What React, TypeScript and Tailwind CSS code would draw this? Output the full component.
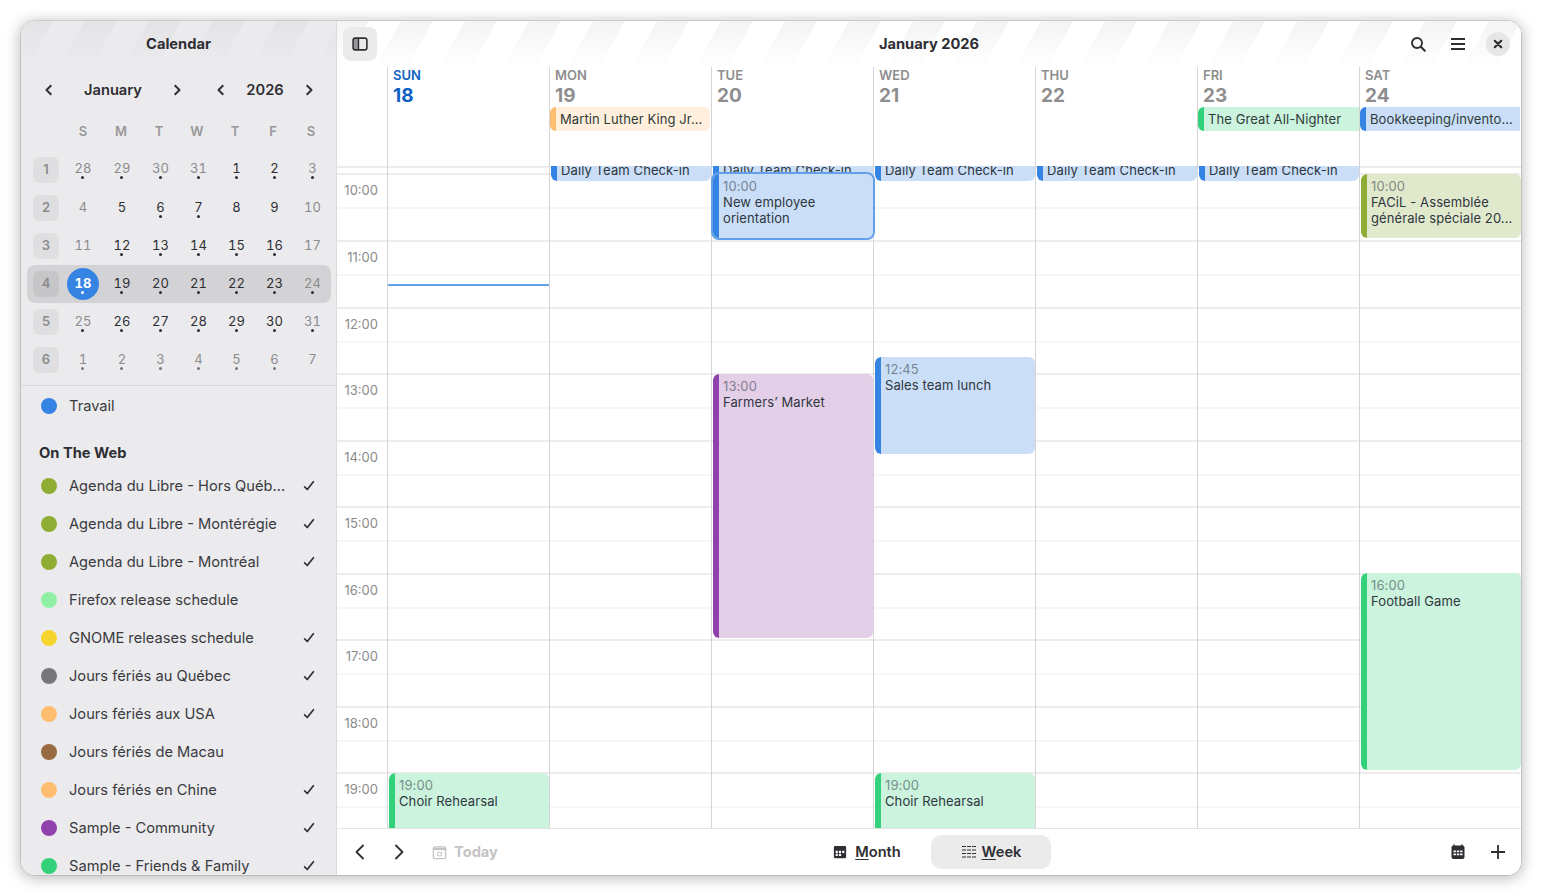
import React from "react";

const BLUE = "#3584e4";
const GREEN = "#33d17a";
const ORANGE = "#ffbe6f";
const PURPLE = "#9141ac";
const OLIVE = "#8fad35";

const HOUR = 66.55;
const y = (t: number) => 8 + (t - 10) * HOUR;

function Icon({ children, size = 16, className = "" }: { children: React.ReactNode; size?: number; className?: string }) {
  return (
    <svg width={size} height={size} viewBox="0 0 16 16" fill="none" className={className}>
      {children}
    </svg>
  );
}

const ChevL = () => (
  <Icon>
    <path d="M10.300 3.200 5.500 8l4.800 4.800" stroke="currentColor" strokeWidth="2" strokeLinejoin="round" />
  </Icon>
);
const ChevR = () => (
  <Icon>
    <path d="M5.700 3.200 10.500 8l-4.800 4.800" stroke="currentColor" strokeWidth="2" strokeLinejoin="round" />
  </Icon>
);
const BigChevL = () => (
  <Icon>
    <path d="M11.500 1 4.500 8l7 7" stroke="currentColor" strokeWidth="1.800" strokeLinejoin="round" />
  </Icon>
);
const BigChevR = ({ className = "" }: { className?: string }) => (
  <Icon className={className}>
    <path d="M4.500 1l7 7-7 7" stroke="currentColor" strokeWidth="1.800" strokeLinejoin="round" />
  </Icon>
);
const Check = () => (
  <Icon size={14}>
    <path d="M2.500 8.500 6 12l7.500-9.500" stroke="#2e2e33" strokeWidth="1.900" strokeLinejoin="round" />
  </Icon>
);

function Nav({ label }: { label: string }) {
  return (
    <div className="flex items-center justify-between">
      <ChevL />
      <span className="text-[14.67px] font-semibold text-[#2e2e33]">{label}</span>
      <ChevR />
    </div>
  );
}

type Cell = { d: number; dim?: boolean; dot?: boolean; today?: boolean };
const c = (d: number, dim = false, dot = true, today = false): Cell => ({ d, dim, dot, today });
const weeks: Cell[][] = [
  [c(28, true), c(29, true), c(30, true), c(31, true), c(1), c(2), c(3, true)],
  [c(4, true, false), c(5, false, false), c(6), c(7), c(8, false, false), c(9, false, false), c(10, true, false)],
  [c(11, true, false), c(12), c(13), c(14), c(15), c(16), c(17, true, false)],
  [c(18, false, true, true), c(19), c(20), c(21), c(22), c(23), c(24, true)],
  [c(25, true), c(26), c(27), c(28), c(29), c(30), c(31, true)],
  [c(1, true), c(2, true), c(3, true), c(4, true), c(5, true), c(6, true), c(7, true, false)],
];

function MiniCalendar() {
  return (
    <div className="ml-1.5 w-[304px]">
      <div className="grid h-[38px] grid-cols-[37px_repeat(7,38px)]">
        <div />
        {["S", "M", "T", "W", "T", "F", "S"].map((d, i) => (
          <div key={i} className="flex items-center justify-center text-[13px] font-semibold text-[#98989a]">
            {d}
          </div>
        ))}
      </div>
      <div className="relative grid auto-rows-[38px] grid-cols-[37px_39px_39px_38px_38px_38px_38px_38px]">
        <div className="absolute left-0 top-[114px] h-[38px] w-[304px] rounded-lg bg-[#d3d3d5]" />
        {weeks.map((w, i) => (
          <React.Fragment key={i}>
            <div className="relative flex items-center justify-center pl-px">
              <div className={`flex h-[26px] w-[26px] items-center justify-center rounded-md text-[13px] font-semibold text-[#8b8b8d] ${i === 3 ? "bg-[#c6c6c8]" : "bg-[#dfdfe1]"}`}>
                {i + 1}
              </div>
            </div>
            {w.map((cell, j) => (
              <div key={j} className="relative flex items-center justify-center pr-px">
                {cell.today && <div className="absolute left-[3px] top-[3px] h-8 w-8 rounded-full bg-[#3584e4]" />}
                <span
                  className={`relative text-[13px] leading-[18px] tabular-nums ${i === 0 ? "-mt-[5px]" : "-mt-[2px]"} ${
                    cell.today ? "font-bold text-white" : cell.dim ? "text-[#8c8c8e]" : "text-[#2e2e33]"
                  }`}
                >
                  {cell.d}
                </span>
                {cell.dot && (
                  <span
                    className={`absolute left-[17px] h-[3px] w-[3px] rounded-full ${i === 0 ? "top-[25px]" : "top-[26px]"} ${
                      cell.today ? "bg-white" : i === 5 ? "bg-[#77777a]" : "bg-[#2e2e33]"
                    }`}
                  />
                )}
              </div>
            ))}
          </React.Fragment>
        ))}
      </div>
    </div>
  );
}

const calendars: [string, string, boolean][] = [
  ["Agenda du Libre - Hors Québec", OLIVE, true],
  ["Agenda du Libre - Montérégie", OLIVE, true],
  ["Agenda du Libre - Montréal", OLIVE, true],
  ["Firefox release schedule", "#8ff0a4", false],
  ["GNOME releases schedule", "#f6d32d", true],
  ["Jours fériés au Québec", "#77767b", true],
  ["Jours fériés aux USA", ORANGE, true],
  ["Jours fériés de Macau", "#986a44", false],
  ["Jours fériés en Chine", ORANGE, true],
  ["Sample - Community", PURPLE, true],
  ["Sample - Friends & Family", GREEN, true],
];

function CalRow({ name, color, checked }: { name: string; color: string; checked?: boolean }) {
  return (
    <div className="flex h-[38px] shrink-0 items-center pl-5 pr-[19px]">
      <span className="h-4 w-4 shrink-0 rounded-full" style={{ backgroundColor: color }} />
      <span className="ml-3 w-[217px] truncate text-[14.67px] text-[#3a3a3f]">{name}</span>
      <span className="ml-auto flex h-4 w-4 items-center justify-center">{checked && <Check />}</span>
    </div>
  );
}

function Sidebar() {
  return (
    <aside className="flex h-full w-[316px] shrink-0 flex-col overflow-hidden border-r border-[#dcdcde] bg-[#ebebed]">
      <div className="flex h-[46px] shrink-0 items-center justify-center bg-[linear-gradient(to_bottom,transparent,#ebebed),repeating-linear-gradient(118.6deg,#e4e4e6_0_28px,#ebebed_28px_56.2px)] text-[14.67px] font-bold text-[#2e2e33]">
        Calendar
      </div>
      <div className="flex h-[46px] shrink-0 items-center pl-5 pr-[19px] text-[#2e2e33]">
        <div className="w-[144px]"><Nav label="January" /></div>
        <div className="ml-auto w-[104px]"><Nav label="2026" /></div>
      </div>
      <MiniCalendar />
      <div className="mb-px mt-1.5 h-px shrink-0 bg-[#d6d6d8]" />
      <CalRow name="Travail" color={BLUE} />
      <div className="mt-[9px] flex h-[38px] shrink-0 items-center pl-[18px] text-[14.67px] font-bold text-[#2e2e33]">On The Web</div>
      <div className="-mt-[5px] flex flex-col">
        {calendars.map(([n, col, ch]) => (
          <CalRow key={n} name={n} color={col} checked={ch} />
        ))}
      </div>
    </aside>
  );
}

const days = [
  { n: "SUN", d: 18, today: true },
  { n: "MON", d: 19 },
  { n: "TUE", d: 20 },
  { n: "WED", d: 21 },
  { n: "THU", d: 22 },
  { n: "FRI", d: 23 },
  { n: "SAT", d: 24 },
];

function AllDay({ title, bg, bar, className }: { title: string; bg: string; bar: string; className: string }) {
  return (
    <div className={`flex h-6 overflow-hidden ${className}`} style={{ backgroundColor: bg }}>
      <span className="w-1.5 shrink-0" style={{ backgroundColor: bar }} />
      <span className="truncate pl-1 pr-1 text-[13px] leading-6 tracking-[0.1px] text-[#2f3b3a]">{title}</span>
    </div>
  );
}

type Ev = {
  col: number;
  top: number;
  bottom: number;
  bg: string;
  bar: string;
  time?: string;
  title: string;
  end?: boolean;
  focus?: boolean;
};

const BLUEBG = "#cadff7";
const GREENBG = "#cbf3dd";

const events: Ev[] = [
  ...[1, 2, 3, 4, 5].map((col) => ({
    col,
    top: -20,
    bottom: 15,
    bg: BLUEBG,
    bar: BLUE,
    title: "Daily Team Check-in",
    end: true,
  })),
  { col: 2, top: y(10), bottom: y(11) - 3, bg: BLUEBG, bar: BLUE, time: "10:00", title: "New employee orientation", focus: true },
  { col: 6, top: 8, bottom: 72, bg: "#e1e9cd", bar: OLIVE, time: "10:00", title: "FACiL - Assemblée générale spéciale 20..." },
  { col: 3, top: 191, bottom: 288, bg: BLUEBG, bar: BLUE, time: "12:45", title: "Sales team lunch" },
  { col: 2, top: 208, bottom: 472, bg: "#e4cfe9", bar: PURPLE, time: "13:00", title: "Farmers’ Market" },
  { col: 6, top: 407, bottom: 604, bg: GREENBG, bar: GREEN, time: "16:00", title: "Football Game" },
  { col: 0, top: 607, bottom: 700, bg: GREENBG, bar: GREEN, time: "19:00", title: "Choir Rehearsal" },
  { col: 3, top: 607, bottom: 700, bg: GREENBG, bar: GREEN, time: "19:00", title: "Choir Rehearsal" },
];

function EventCard({ e }: { e: Ev }) {
  return (
    <div
      className={`absolute left-px right-0 flex rounded-md ${e.focus ? "z-10 outline-2 outline-[#62a0ea]" : "overflow-hidden"}`}
      style={{ top: e.top, height: e.bottom - e.top, backgroundColor: e.bg }}
    >
      <span className="w-1.5 shrink-0 rounded-l-md" style={{ backgroundColor: e.bar }} />
      <div className={`min-w-0 flex-1 pl-1 pr-2 text-[13px] leading-4 tracking-[0.1px] text-[#2f3640] ${e.end ? "flex flex-col justify-end pb-[3px]" : "pt-1"}`}>
        {e.time && <div className="opacity-55">{e.time}</div>}
        <div>{e.title}</div>
      </div>
    </div>
  );
}

const hours = ["10:00", "11:00", "12:00", "13:00", "14:00", "15:00", "16:00", "17:00", "18:00", "19:00"];

function WeekBody() {
  return (
    <div className="relative flex min-h-0 flex-1 overflow-hidden">
      <div className="absolute inset-x-0 top-0 flex flex-col">
        <div className="h-[7.45px] shrink-0 border-t-2 border-[#ececec]" />
        {hours.map((h) => (
          <div key={h} className="h-[66.55px] shrink-0 border-t-2 border-[#ececec]">
            <div className="mt-[32px] h-0.5 bg-[#f6f6f6]" />
          </div>
        ))}
      </div>
      <div className="relative flex w-[50px] shrink-0 flex-col pt-[7.45px]">
        {hours.map((h) => (
          <div key={h} className="h-[66.55px] shrink-0 pr-[9px] pt-[9px] text-right text-[13px] leading-4 text-[#8b8b8b]">
            {h}
          </div>
        ))}
      </div>
      {days.map((d, i) => (
        <div key={d.n} className="relative w-[162px] shrink-0 border-l border-[#d4d4d4]">
          {i === 0 && <div className="absolute inset-x-0 top-[118px] h-0.5 bg-[#62a0ea]" />}
          {events.filter((e) => e.col === i).map((e, k) => (
            <EventCard key={k} e={e} />
          ))}
        </div>
      ))}
    </div>
  );
}

function Main() {
  return (
    <main className="flex min-w-0 flex-1 flex-col bg-white">
      <div className="grid h-[46px] shrink-0 grid-cols-[1fr_auto_1fr] items-center bg-[linear-gradient(to_bottom,transparent,#ffffff),repeating-linear-gradient(118.6deg,#f4f4f4_0_28px,#ffffff_28px_56.2px)] px-1.5 text-[#2e2e33]">
        <div className="flex">
          <button className="flex h-[34px] w-[34px] items-center justify-center rounded-lg bg-[#ebebeb]">
            <Icon>
              <rect x="1.100" y="2.100" width="13.800" height="11.800" rx="2.200" stroke="#2e2e33" strokeWidth="1.600" />
              <path d="M2 3h4.500v10H2z" fill="#2e2e33" fillOpacity=".45" />
              <path d="M6.500 2v12" stroke="#2e2e33" strokeWidth="1.400" />
            </Icon>
          </button>
        </div>
        <div className="text-[14.67px] font-bold">January 2026</div>
        <div className="flex items-center justify-end pr-[5px]">
          <Icon>
            <circle cx="7" cy="7" r="5" stroke="#2e2e33" strokeWidth="1.900" />
            <path d="m10.800 10.800 4 4" stroke="#2e2e33" strokeWidth="2" strokeLinecap="round" />
          </Icon>
          <div className="ml-[24px]">
            <Icon>
              <path d="M1 3h14M1 8h14M1 13h14" stroke="#2e2e33" strokeWidth="1.800" />
            </Icon>
          </div>
          <div className="ml-[20px] flex h-6 w-6 items-center justify-center rounded-full bg-[#e6e6e6]">
            <Icon size={16}>
              <path d="m4.800 4.800 6.400 6.400m0-6.400-6.400 6.400" stroke="#2e2e33" strokeWidth="2.200" strokeLinecap="round" />
            </Icon>
          </div>
        </div>
      </div>

      <div className="flex h-[99px] shrink-0">
        <div className="w-[50px] shrink-0" />
        {days.map((d, i) => (
          <div key={d.n} className="w-[162px] shrink-0 border-l border-[#d4d4d4]">
            <div className={`pl-[5px] text-[13px] font-semibold leading-4 ${d.today ? "text-[#0d62c4]" : "text-[#8e8e8e]"}`}>{d.n}</div>
            <div className={`h-6 pl-[5px] pt-px text-[19px] font-bold leading-6 ${d.today ? "text-[#0d62c4]" : "text-[#8e8e8e]"}`}>{d.d}</div>
            {i === 1 && <AllDay title="Martin Luther King Jr. Day" bg="#ffefdc" bar={ORANGE} className="mr-px rounded-md" />}
            {i === 5 && <AllDay title="The Great All-Nighter" bg={GREENBG} bar={GREEN} className="-mr-px rounded-l-md" />}
            {i === 6 && <AllDay title="Bookkeeping/inventory review" bg={BLUEBG} bar={BLUE} className="mr-px rounded-l-md" />}
          </div>
        ))}
      </div>

      <WeekBody />

      <div className="relative grid h-[47px] shrink-0 grid-cols-[1fr_auto_1fr] items-center border-t border-[#e4e4e4] bg-white text-[#2e2e33]">
        <div className="flex items-center pl-[15px]">
          <BigChevL />
          <div className="ml-[23px]"><BigChevR /></div>
          <div className="ml-[25px] flex items-center text-[#c4c4c4]">
            <Icon size={15}>
              <rect x="1.500" y="2" width="13" height="12.500" rx="1.500" stroke="currentColor" strokeWidth="1.500" />
              <path d="M2 3h12v2.500H2z" fill="currentColor" />
              <rect x="6" y="8" width="4" height="3.500" stroke="currentColor" strokeWidth="1" />
            </Icon>
            <span className="ml-[7px] text-[14.67px] font-bold">Today</span>
          </div>
        </div>
        <div className="flex items-center gap-1">
          <div className="flex h-[34px] w-[120px] items-center justify-center">
            <Icon size={14}>
              <path d="M2.500 1h11A1.500 1.500 0 0 1 15 2.500v11a1.500 1.500 0 0 1-1.500 1.500h-11A1.500 1.500 0 0 1 1 13.500v-11A1.500 1.500 0 0 1 2.500 1Z" fill="#2e2e33" />
              <path d="M3 6.500h2.500V9H3zM6.750 6.500h2.500V9h-2.500zM10.500 6.500H13V9h-2.500zM3 10h2.500v2.500H3zM6.750 10h2.500v2.500h-2.500z" fill="#fff" />
            </Icon>
            <span className="ml-2 text-[14.67px] font-semibold"><span className="underline underline-offset-2">M</span>onth</span>
          </div>
          <div className="flex h-[34px] w-[120px] items-center justify-center rounded-[10px] bg-[#ebebeb]">
            <Icon size={16}>
              <path d="M1 2.500h4M6 2.500h4M11 2.500h4M1 6h4M6 6h4M11 6h4M1 9.500h4M6 9.500h4M11 9.500h4M1 13h4M6 13h4M11 13h4" stroke="#2e2e33" strokeWidth="1.200" />
            </Icon>
            <span className="ml-[5px] text-[14.67px] font-semibold"><span className="underline underline-offset-2">W</span>eek</span>
          </div>
        </div>
        <div className="flex items-center justify-end pr-[15px]">
          <Icon size={16}>
            <path d="M4 .5v2M12 .5v2" stroke="#2e2e33" strokeWidth="1.500" />
            <rect x="1.500" y="1.500" width="13" height="13.500" rx="2" fill="#2e2e33" />
            <path d="M3.500 6.500h2.400v1.800H3.500zM6.800 6.500h2.400v1.800H6.800zM10.100 6.500h2.400v1.800h-2.400zM3.500 9.500h2.400v1.800H3.500zM6.800 9.500h2.400v1.800H6.800zM10.100 9.500h2.400v1.800h-2.400z" fill="#fff" />
          </Icon>
          <div className="ml-[24px]">
            <Icon>
              <path d="M8 1v14M1 8h14" stroke="#2e2e33" strokeWidth="1.800" />
            </Icon>
          </div>
        </div>
      </div>
    </main>
  );
}

export default function App() {
  return (
    <div className="h-[896px] w-[1542px] overflow-hidden bg-white p-[21px] font-['Inter','Liberation_Sans',sans-serif]">
      <div className="flex h-[854px] w-[1500px] overflow-hidden rounded-[14px] shadow-[0_0_0_1px_rgba(0,0,0,0.1),0_2px_14px_2px_rgba(0,0,0,0.25)]">
        <Sidebar />
        <Main />
      </div>
    </div>
  );
}
